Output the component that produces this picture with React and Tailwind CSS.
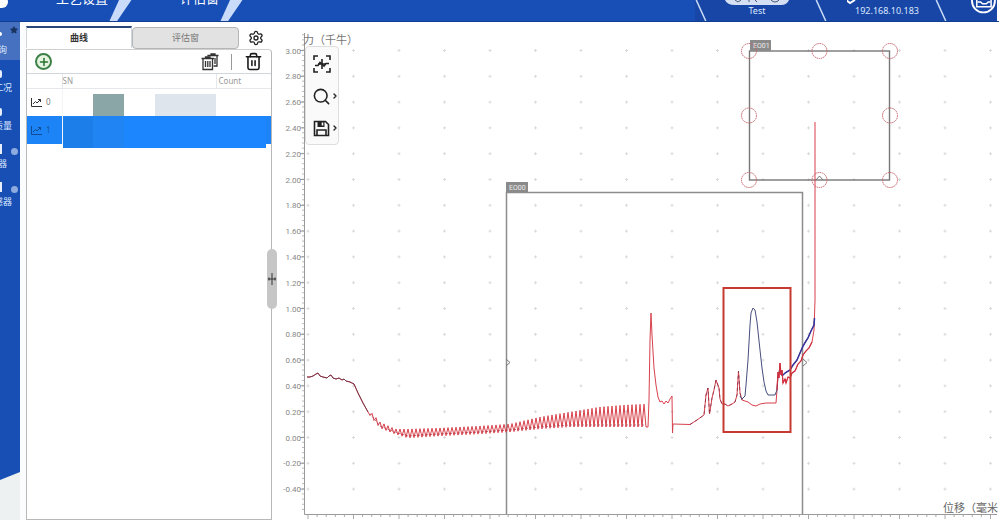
import React from 'react';
import { Settings, Trash2, Search, ChevronRight, Star, Plus } from 'lucide-react';

const sideItems = [
    { label: '询', active: true },
    { label: '工况', wide: true },
    { label: '质量', wide: true },
    { label: '器', badge: true },
    { label: '感器', badge: true, wide: true }
];

const rows = [
    { id: 0, selected: false },
    { id: 1, selected: true }
];

const yLabels = Array.from({ length: 18 }, (_, i) => 3 - i * 0.2);
const gridX = Array.from({ length: 16 }, (_, i) => 308 + i * 45.5);
const yOf = (value) => 437.5 - value * 129;

const lead = [
    [307, 377], [310, 377], [313, 376], [316, 374], [318, 373], [320, 376], [323, 377], [327, 378],
    [329, 376], [331, 375], [333, 378], [336, 379], [339, 378], [342, 380], [344, 379], [346, 381], [350, 382],
    [354, 384], [358, 393], [363, 403], [368, 412]
];

const spikes = [
    [648, 427], [649, 400], [650, 340], [651, 313], [652, 335], [654, 368], [656, 385], [658, 397], [660, 402],
    [662, 401], [664, 404], [666, 401], [668, 403], [670, 399], [672, 396], [672.5, 433], [673, 424],
    [690, 424.5], [697, 420], [704, 415], [706, 395], [708, 388], [709.5, 414], [712, 398], [714, 390],
    [716, 380], [719, 388], [720, 399], [722, 404], [725, 404], [728, 406], [732, 404], [735, 402], [737, 395],
    [738.5, 371], [740, 393], [742, 400]
];

const redTail = [
    [748, 402], [752, 405], [756, 406], [760, 404], [766, 403], [776, 403], [777, 390], [778, 372], [779, 378],
    [780, 363], [781, 375], [782, 370], [783, 383], [785, 379], [786, 383], [788, 377], [790, 378], [792, 373],
    [795, 371], [798, 364], [801, 361], [803, 355], [806, 351], [809, 348], [812, 342], [814, 330],
    [815, 300], [815, 122]
];

const blueCurve = [
    [740, 396], [742, 399], [745, 396], [746, 385], [748, 360], [750, 325], [751, 313], [753, 308], [755, 310],
    [757, 322], [760, 350], [762, 368], [764, 382], [766, 391], [768, 395], [775, 395], [777, 390],
    [778, 376], [780, 368], [782, 376], [785, 373], [790, 370], [793, 365], [797, 360], [800, 353],
    [803, 346], [806, 341], [808, 338], [811, 331], [814, 325], [814.5, 318]
];

// [x, top, bottom] of the oscillating part
const envelope = [
    [368, 409, 413], [380, 422, 428], [395, 429, 434], [408, 429, 438], [440, 428, 436], [480, 426, 434],
    [510, 424, 432], [540, 417, 429], [570, 412, 427], [600, 407, 427], [625, 405, 427], [648, 404, 427]
];

function envelopeAt(x, side) {
    const i = Math.max(1, envelope.findIndex((p) => p[0] >= x));
    const a = envelope[i - 1];
    const b = envelope[i];
    return a[side] + ((b[side] - a[side]) * (x - a[0])) / (b[0] - a[0]);
}

const wave = Array.from({ length: 139 }, (_, i) => {
    const x = 370 + i * 2;
    return [x, envelopeAt(x, i % 2 ? 1 : 2)];
});

const middle = wave.map(([x]) => [x, envelopeAt(x, 2) - 2]);

const line = (points) => points.map((p) => p.join(',')).join(' ');

function Slash({ wide }) {
    return wide ? (
        <svg className="w-6 h-full" viewBox="0 0 24 22">
            <path d="M11 0H24L9 22H1z" fill="#c9dbf8" />
        </svg>
    ) : (
        <svg className="w-3 h-full" viewBox="0 0 12 22">
            <path d="M1 0L11 22" stroke="#c9dbf8" strokeWidth="1.6" />
        </svg>
    );
}

function Header() {
    return (
        <header className="h-[22px] flex overflow-hidden bg-[#174fb6] border-b border-[#123d91] text-white">
            <nav className="flex items-start">
                <span className="w-2 h-3 -mt-1 mr-12 bg-white rounded-r-full" />
                <button className="w-[52px] -mt-3 text-[13px] leading-5 whitespace-nowrap">工艺设置</button>
                <Slash wide />
                <button className="w-[39px] ml-12 -mt-3 text-[13px] leading-5 whitespace-nowrap">评估窗</button>
                <Slash wide />
            </nav>
            <div className="ml-auto flex bg-[#1846a6] text-[9px] text-[#dce8ff]">
                <Slash />
                <div className="w-[108px] pr-2 flex flex-col items-center">
                    <svg className="w-16 h-[5px]" viewBox="0 0 64 5">
                        <path d="M0 0H64Q62 5 56 5H10Q2 5 0 0z" fill="#d5dff3" />
                        <path d="M10 0l3 2 3-2M24 0v2M30 0l2 2M46 0q4 4 8 0" stroke="#4a5570" fill="none" />
                    </svg>
                    <span className="leading-3">Test</span>
                </div>
                <Slash />
                <div className="w-[108px] pl-3 flex flex-col items-center">
                    <svg className="w-20 h-[5px]" viewBox="0 0 80 5">
                        <path d="M-1 0L3 3L8 0" stroke="white" strokeWidth="2" fill="none" />
                    </svg>
                    <span className="leading-3">192.168.10.183</span>
                </div>
                <Slash />
                <svg className="w-[50px] h-full" viewBox="0 0 50 22" fill="none" stroke="white">
                    <circle cx="37" cy="1" r="12" strokeWidth="2" />
                    <path d="M30 0V7H45V0M31 2H34L36 4H40L42 2H44" strokeWidth="1.6" />
                </svg>
                <span className="w-0.5 bg-white" />
            </div>
        </header>
    );
}

function SideBar() {
    return (
        <aside className="w-5 flex flex-col overflow-hidden bg-[#184fb5] text-[9px] text-[#dbe7ff]">
            {sideItems.map((item, index) => (
                <a
                    key={index}
                    href="#"
                    className={`relative h-[38px] flex flex-col items-start justify-end pb-1 ${item.active ? 'bg-[#4671c0]' : ''}`}
                >
                    {item.active && <Star className="absolute top-1 right-0.5 w-2 h-2 text-[#18345f] fill-[#18345f]" />}
                    {item.badge && <span className="absolute top-3 right-0.5 w-[7px] h-[7px] rounded-full bg-[#8dabdf]" />}
                    {!item.active && <span className={`mb-1 bg-[#e8effc] ${item.badge ? 'w-0.5 h-2.5' : 'w-0.5 h-2 rounded-r-full'}`} />}
                    {item.active && <span className="mb-2 w-0.5 h-1 bg-white rounded-r-full" />}
                    <span className={`w-3 flex leading-3 whitespace-nowrap ${item.wide ? 'justify-end' : '-ml-0.5'}`}>{item.label}</span>
                </a>
            ))}
            <div className="mt-auto">
                <svg className="w-5 h-2 block" viewBox="0 0 20 8">
                    <path d="M0 8L20 0V8z" fill="#eef1f1" />
                </svg>
                <div className="h-10 bg-[#eef1f1]" />
            </div>
        </aside>
    );
}

function CurvePanel() {
    return (
        <section className="w-[246px] flex flex-col pt-1">
            <div className="flex items-start text-[9px]">
                <button className="w-[106px] h-[22px] border-t-2 border-x border-[#2b4777] border-x-gray-300 font-bold text-[#333]">曲线</button>
                <button className="w-[107px] h-[22px] mt-px bg-[#e2e2e2] border border-[#b5b5b5] rounded-sm text-[#777]">评估窗</button>
                <button aria-label="设置" className="mx-auto mt-1">
                    <Settings className="w-4 h-4 text-[#222]" />
                </button>
            </div>
            <div className="flex-1 border border-[#b8b8b8] border-t-[#d0d0d0] rounded-tr-sm">
                <div className="h-6 flex items-center px-2 border-b border-gray-300">
                    <button aria-label="添加" className="w-[17px] h-[17px] flex items-center justify-center rounded-full border-2 border-[#3c8045] bg-[#e5f5e2]">
                        <Plus className="w-3 h-3 text-[#28702f]" strokeWidth={3} />
                    </button>
                    <button aria-label="全部删除" className="ml-auto">
                        <svg className="w-[18px] h-[18px]" viewBox="0 0 18 18" fill="none" stroke="#333" strokeWidth="1.3">
                            <path d="M7 3.500V2.500H17.500M10 2.500V1H14V2.500M16 3V13H12.500M14 5V11" />
                            <path d="M0.500 5.500H13M4.500 5V4H9V5M2 6V16.500H11.500V6M4.500 8V14M6.800 8V14M9 8V14" />
                        </svg>
                    </button>
                    <span className="w-px h-4 mx-3 bg-[#999]" />
                    <button aria-label="删除">
                        <Trash2 className="w-[19px] h-[19px] text-[#1a1a1a]" />
                    </button>
                </div>
                <table className="w-full table-fixed text-[8px] text-[#777]">
                    <colgroup>
                        <col className="w-[35px]" />
                        <col />
                        <col className="w-[55px]" />
                    </colgroup>
                    <thead>
                        <tr className="h-[14px] border-b border-gray-200 text-left leading-3 text-[#999]">
                            <th className="p-0 border-r border-gray-200"></th>
                            <th className="font-normal border-r border-gray-200 p-0">SN</th>
                            <th className="font-normal p-0 pl-0.5">Count</th>
                        </tr>
                    </thead>
                    <tbody>
                        {rows.map((row) => (
                            <tr key={row.id} className={row.selected ? 'h-7 bg-[#1d84f7] text-[#16549c]' : 'h-7'}>
                                <td className="p-0 pl-1 border-r border-gray-100">
                                    <span className="flex items-center gap-1">
                                        <svg className="w-[11px] h-[9px]" viewBox="0 0 11 9" fill="none" stroke={row.selected ? '#124b91' : '#333'}>
                                            <path d="M0.500 0V8.500H11M2 6L4.500 3.500L6 5L9.500 1.500M7 1.500H9.500V4" />
                                        </svg>
                                        {row.id}
                                    </span>
                                </td>
                                <td className="relative p-0 align-bottom">
                                    {row.selected ? (
                                        <div className="absolute left-0 top-px w-[203px] h-[31px] flex bg-[#1b86fd]">
                                            <span className="w-[30px] bg-[#1c7fe9]" />
                                            <span className="w-[31px] bg-[#2085f2]" />
                                        </div>
                                    ) : (
                                        <div className="flex h-[22px]">
                                            <span className="w-[31px] ml-[30px] bg-[#8aa6a6]" />
                                            <span className="w-[61px] ml-[31px] bg-[#dfe5ed]" />
                                        </div>
                                    )}
                                </td>
                                <td></td>
                            </tr>
                        ))}
                    </tbody>
                </table>
            </div>
        </section>
    );
}

function ChartTools() {
    return (
        <div className="absolute left-[33px] top-6 w-[34px] h-[99px] flex flex-col justify-around bg-[#fafafa] border border-[#dedede] rounded-sm text-[#222]">
            <button aria-label="适应窗口" className="pl-1.5">
                <svg className="w-5 h-5" viewBox="0 0 20 20" fill="none" stroke="currentColor" strokeWidth="1.6">
                    <path d="M2 6V2H6M14 2H18V6M18 14V18H14M6 18H2V14" />
                    <path d="M3 11.500H6L8 8.500L12 12L14 9.500H17" />
                    <path d="M10 5V15M6 10H14" />
                </svg>
            </button>
            <button aria-label="缩放" className="flex items-center pl-1.5">
                <Search className="w-[19px] h-[19px] shrink-0" />
                <ChevronRight className="w-2 h-2 shrink-0" strokeWidth={4} />
            </button>
            <button aria-label="保存" className="flex items-center pl-1.5">
                <svg className="w-[19px] h-[19px] shrink-0" viewBox="0 0 19 19" fill="none" stroke="currentColor" strokeWidth="1.6">
                    <path d="M2.500 2.500H13.500L16.500 5.500V16.500H2.500z" />
                    <path d="M5 16V11H14V16" />
                    <path d="M5.500 3H12.500V8H5.500z" fill="currentColor" stroke="none" />
                    <path d="M10.500 3.500V6.500" stroke="#fafafa" />
                </svg>
                <ChevronRight className="w-2 h-2 shrink-0" strokeWidth={4} />
            </button>
        </div>
    );
}

function Chart() {
    return (
        <svg
            className="w-full h-auto block font-[Roboto,'Noto_Sans_CJK_SC',sans-serif]"
            viewBox="272 22 727 498"
            fill="none"
        >
            {/* grid */}
            {gridX.map((x) =>
                yLabels.map((v) => (
                    <path key={`${x}-${v}`} d={`M${x - 1.5} ${yOf(v)}h3m-1.500 -1.500v3`} stroke="#dadada" />
                ))
            )}

            {/* axes */}
            <path d="M304.500 33V514.500H997" stroke="#9a9a9a" />
            {Array.from({ length: 93 }, (_, i) => (
                <path key={i} d={`M302 ${34.7 + i * 5.16}h2`} stroke="#aaa" strokeWidth="0.8" />
            ))}
            {Array.from({ length: 76 }, (_, i) => (
                <path key={i} d={`M${308 + i * 9.1} 515v${i % 5 ? 2 : 4}`} stroke="#aaa" />
            ))}
            {yLabels.map((v) => (
                <g key={v}>
                    <path d={`M300 ${yOf(v)}h4`} stroke="#999" />
                    <text x="301" y={yOf(v) + 3} textAnchor="end" fontSize="8" fill="#888">
                        {Math.abs(v) < 0.01 ? '0.00' : v.toFixed(2)}
                    </text>
                </g>
            ))}
            <text x="303" y="44" fontSize="11" fill="#777">力（千牛）</text>
            <text x="943" y="512" fontSize="11" fill="#666">位移（毫米</text>

            {/* evaluation windows */}
            <path d="M506.500 514V192.500H802.500V514" stroke="#8c8c8c" strokeWidth="1.5" />
            <rect x="506" y="182" width="22" height="10" fill="#8a8a8a" />
            <text x="509" y="190" fontSize="7" fill="#eee">EO00</text>
            <rect x="749.500" y="51" width="140" height="129" stroke="#777" strokeWidth="1.4" />
            <rect x="750" y="40" width="21" height="11" fill="#8a8a8a" />
            <text x="753" y="48" fontSize="7" fill="#eee">EO01</text>
            <path d="M506 359l4 3.500l-4 3.500M803 359l4 3.500l-4 3.500M816 180l3.500 -4l3.500 4" stroke="#777" />

            {/* curves */}
            <polyline points={line([...lead, ...wave, ...spikes, ...redTail])} stroke="#d8414c" strokeWidth="1" />
            <polyline points={line(lead)} stroke="#6b3548" strokeWidth="0.9" />
            <polyline points={line(middle)} stroke="#a83a4c" strokeWidth="0.7" strokeDasharray="2 2" />
            <polyline points={line(spikes.slice(17))} stroke="#7a2848" strokeWidth="0.7" strokeDasharray="3 3" />
            <polyline points={line(blueCurve)} stroke="#474e7d" strokeWidth="1" />
            <polyline points={line(blueCurve.slice(19))} stroke="#39349b" strokeWidth="1.5" />
            <polyline points={line(redTail.slice(6, -3))} stroke="#cf3040" strokeWidth="1.2" />

            {[749, 819.5, 890].map((x) =>
                [51, 115.5, 180].map((y) =>
                    x === 819.5 && y === 115.5 ? null : (
                        <circle key={`${x}-${y}`} cx={x} cy={y} r="7.5" stroke="#c4636b" strokeDasharray="1.5 0.7" />
                    )
                )
            )}
            <rect x="723.500" y="288" width="67" height="144" stroke="#c63a32" strokeWidth="2" />
        </svg>
    );
}

export default function App() {
    return (
        <div className="min-h-screen flex flex-col bg-white font-['Noto_Sans','Noto_Sans_CJK_SC',sans-serif]">
            <Header />
            <div className="flex-1 flex">
                <SideBar />
                <div className="w-1.5 bg-[#fbfcfd]" />
                <CurvePanel />
                <main className="relative flex-1 min-w-0">
                    <Chart />
                    <ChartTools />
                    <div className="absolute -left-[5px] top-[227px] w-2.5 h-[60px] flex items-center justify-center rounded-full bg-[#c6c6c6]">
                        <svg className="w-2.5 h-3" viewBox="0 0 10 12" stroke="#333" fill="none">
                            <path d="M5 0V12M1 6H9M2 4.500V7.500M8 4.500V7.500" />
                        </svg>
                    </div>
                </main>
            </div>
        </div>
    );
}
